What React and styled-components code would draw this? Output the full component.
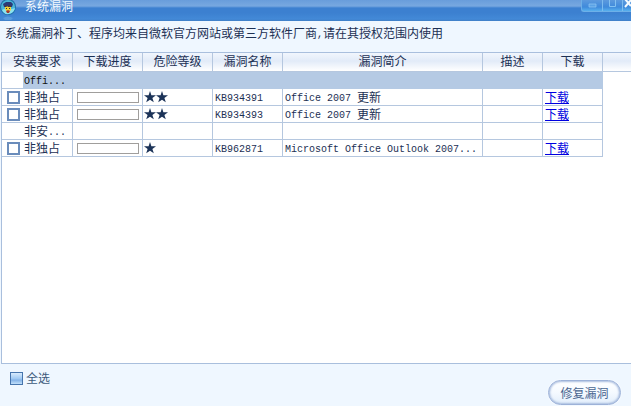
import React, { useState } from 'react'
import styled, { createGlobalStyle } from 'styled-components'


const GlobalStyle = createGlobalStyle`
    * {
        box-sizing: border-box;
    }

    body {
        margin: 0;
        overflow: hidden;
        font-family: "Noto Sans CJK SC", sans-serif;
        font-size: 12px;
        line-height: 16px;
        color: #1c3054;
    }
`

const Container = styled.div`
    display: flex;
    flex-direction: column;
    height: 100vh;
    background-color: #eff7ff;
`

const TitleBar = styled.header`
    display: flex;
    justify-content: space-between;
    align-items: flex-start;
    height: 21px;
    flex-shrink: 0;
    background: linear-gradient(#689ddb 0px, #77a8e0 6px, #3c80d0 8px, #3c80d0 13px, #4389d7 19px, #3f7fc6 21px);
`

const Brand = styled.div`
    display: flex;
    gap: 9px;
    height: 21px;
`

const Title = styled.h1`
    margin: 0;
    font-size: 12px;
    line-height: 12px;
    font-weight: 400;
    color: #f4faff;
`

const WindowButtons = styled.div`
    display: flex;
    height: 12px;
    border: 1px solid #6db0e8;
    border-width: 0 0 1px 1px;
    border-radius: 0 0 0 3px;
    background: linear-gradient(#5d9ade, #3f8adb 7px, #58b0ee);
`

const WindowButton = styled.button`
    display: flex;
    width: ${props => props.$width}px;
    height: 11px;
    padding: 0;
    justify-content: center;
    overflow: hidden;
    border: 0;
    border-left: ${props => props.$first ? '0' : '1px solid #7dbcef'};
    background: none;
`

const Notice = styled.p`
    margin: 0;
    padding: 4px 5px 11px;
`

const Panel = styled.main`
    flex: 1;
    margin-left: 1px;
    border: 1px solid #a9bfdd;
    border-right: 0;
    background-color: #ffffff;
    overflow: hidden;
`

const HeadBand = styled.div`
    min-height: 100%;
    background: linear-gradient(#f1f6fd 0px, #e2ebf8 8px, #ffffff 18px) top / 100% 18px no-repeat,
        linear-gradient(#b5c7df, #b5c7df) 0 18px / 100% 1px no-repeat;
`

const Table = styled.table`
    width: 601px;
    table-layout: fixed;
    border-collapse: separate;
    border-spacing: 0;
`

const Col = styled.col`
    width: ${props => props.$width}px;
`

const HeadCell = styled.th`
    height: 19px;
    padding: 0 0 2px;
    font-weight: 400;
    border-right: 1px solid #b5c7df;
    border-bottom: 1px solid #b5c7df;
`

const Row = styled.tr`
    color: ${props => props.$selected ? '#101010' : 'inherit'};
    background-color: ${props => props.$selected ? '#b5cae4' : '#ffffff'};
`

const Cell = styled.td`
    height: 17px;
    padding: 0 0 0 ${props => props.$inset || 1}px;
    line-height: 16px;
    white-space: nowrap;
    overflow: hidden;
    border-right: 1px solid ${props => props.$selected ? '#b5cae4' : '#b5c7df'};
    border-bottom: 1px solid ${props => props.$selected ? '#b5cae4' : '#b5c7df'};
`

const CheckCell = styled(Cell)`
    padding-left: 5px;
    border-right: 0;
    background-color: #ffffff;
`

const Latin = styled.span`
    font-family: "Liberation Mono", monospace;
    font-size: 10px;
    line-height: 10px;
    vertical-align: 1px;
`

const Checkbox = styled.input.attrs({ type: 'checkbox' })`
    appearance: none;
    display: block;
    width: 13px;
    height: 13px;
    margin: 0;
    border: 2px solid #6a8cbb;
    background-color: #ffffff;

    &:checked {
        background-color: #6a8cbb;
    }
`

const AllCheckbox = styled(Checkbox)`
    border: 1px solid #4675ad;
    background: linear-gradient(#d8ebfd, #9cc7f2 6px, #83b1e6 7px, #c1e0fb);
`

const Progress = styled.progress`
    appearance: none;
    display: block;
    width: 62px;
    height: 11px;
    border: 1px solid #a09e9c;
    background-color: #ffffff;

    &::-webkit-progress-bar {
        background-color: #ffffff;
    }
`

const StarList = styled.div`
    display: flex;
`

const Star = styled.svg`
    display: block;
    width: 12px;
    height: 12px;
`

const Link = styled.a`
    color: #0000e0;
    text-decoration: underline;
`

const Footer = styled.footer`
    display: flex;
    justify-content: space-between;
    align-items: flex-start;
    height: 42px;
    flex-shrink: 0;
    padding: 0 10px;
`

const SelectAll = styled.label`
    display: flex;
    align-items: center;
    gap: 3px;
    padding-top: 6px;
    color: #3c5a7c;
`

const RepairButton = styled.button`
    width: 73px;
    height: 25px;
    margin-top: 16px;
    padding: 0;
    border: 1px solid #9db2d8;
    border-radius: 13px;
    background: linear-gradient(#ffffff, #f4f9ff 12px, #e2eefb);
    box-shadow: inset 0 0 2px 1px #a9bddf, 0 0 2px #ffffff;
    font-family: inherit;
    font-size: 12px;
    line-height: 16px;
    color: #4a6690;
    white-space: nowrap;
`

const headings = ['下载进度', '危险等级', '漏洞名称', '漏洞简介', '描述', '下载']

const groups = [
  {
    name: <Latin>Offi...</Latin>,
    selected: true,
    patches: [
      { id: 'KB934391', level: 2, info: 'Office 2007', suffix: '更新' },
      { id: 'KB934393', level: 2, info: 'Office 2007', suffix: '更新' },
    ],
  },
  {
    name: <>非安<Latin>...</Latin></>,
    patches: [
      { id: 'KB962871', level: 1, info: 'Microsoft Office Outlook 2007...' },
    ],
  },
]

const allIds = groups.flatMap(group => group.patches.map(patch => patch.id))

function Logo() {
  return (
    <svg width="16" height="21" viewBox="0 0 16 21" aria-hidden="true">
        <circle cx="8" cy="7" r="8" fill="#1f6fa8" />
        <circle cx="8" cy="7" r="7" fill="#49b5d8" />
        <path d="M2 10Q4 15 9 14Q14 13 15 8L12 9L4 9Z" fill="#8be1ee" />
        <path d="M3 4L6 2H11L13 4L12 7L4 7Z" fill="#2b3a78" />
        <path d="M5 6H11V10L9 12H7L5 9Z" fill="#f0cf38" />
        <path d="M5 6L6 5L7 7L9 5L11 6V7H5Z" fill="#4a3a3b" />
        <path d="M6 8.5H7M9 8.5H10" stroke="#43302a" />
        <path d="M6 11L8 10L10 11L9 13H7Z" fill="#a13b36" />
        <path d="M3 18Q8 15 13 18L11 20H5Z" fill="#73b4e6" opacity=".45" />
    </svg>
  )
}

function Stars({ count }) {
  return (
    <StarList role="img" aria-label={`${count}`}>
        {Array.from({ length: count }, (_, i) => (
          <Star key={i} viewBox="0 0 12 12">
              <path d="M6 0L7.4 4.2H12L8.4 6.9L9.8 11.3L6 8.7L2.2 11.3L3.6 6.9L0 4.2H4.6Z" fill="#1c3358" />
          </Star>
        ))}
    </StarList>
  )
}

function PatchRow({ patch, checked, onToggle }) {
  return (
    <Row>
        <CheckCell>
            <Checkbox aria-label={patch.id} checked={checked} onChange={onToggle} />
        </CheckCell>
        <Cell>非独占</Cell>
        <Cell $inset={4}><Progress value={0} max={100} aria-label={patch.id} /></Cell>
        <Cell $inset={1}><Stars count={patch.level} /></Cell>
        <Cell $inset={2}><Latin>{patch.id}</Latin></Cell>
        <Cell $inset={2}><Latin>{patch.info} </Latin>{patch.suffix}</Cell>
        <Cell />
        <Cell $inset={2}><Link href="#download">下载</Link></Cell>
    </Row>
  )
}

function App() {
  const [chosen, setChosen] = useState([])

  const toggle = (id) => {
    setChosen(chosen.includes(id) ? chosen.filter(item => item !== id) : [...chosen, id])
  }

  return (
    <Container>
        <GlobalStyle/>

        <TitleBar>
            <Brand>
                <Logo/>
                <Title>系统漏洞</Title>
            </Brand>
            <WindowButtons>
                <WindowButton $first $width={20} aria-label="最小化">
                    <svg width="9" height="11"><path d="M1 4H8V7H1Z" fill="#5ba3e6" stroke="#93c8f3" strokeWidth=".7" /></svg>
                </WindowButton>
                <WindowButton $width={20} aria-label="最大化">
                    <svg width="9" height="11"><path d="M1.5 0V6.5H7.5V0" fill="none" stroke="#83c1f1" /></svg>
                </WindowButton>
                <WindowButton $width={9} aria-label="关闭">
                    <svg width="8" height="11"><path d="M2 -1L8 6M8 0L2 7" fill="none" stroke="#f3faff" strokeWidth="2" /></svg>
                </WindowButton>
            </WindowButtons>
        </TitleBar>

        <Notice>系统漏洞补丁、程序均来自微软官方网站或第三方软件厂商<Latin>,</Latin>请在其授权范围内使用</Notice>

        <Panel>
            <HeadBand>
                <Table>
                    <colgroup>
                        {[21, 50, 70, 70, 70, 200, 60, 60].map((width, i) => <Col key={i} $width={width} />)}
                    </colgroup>
                    <thead>
                        <tr>
                            <HeadCell colSpan={2}>安装要求</HeadCell>
                            {headings.map(heading => <HeadCell key={heading}>{heading}</HeadCell>)}
                        </tr>
                    </thead>
                    {groups.map((group, i) => (
                      <tbody key={i}>
                          <Row $selected={group.selected}>
                              <CheckCell />
                              <Cell $selected={group.selected}>{group.name}</Cell>
                              {headings.map(heading => <Cell key={heading} $selected={group.selected} />)}
                          </Row>
                          {group.patches.map(patch => (
                            <PatchRow
                              key={patch.id}
                              patch={patch}
                              checked={chosen.includes(patch.id)}
                              onToggle={() => toggle(patch.id)}
                            />
                          ))}
                      </tbody>
                    ))}
                </Table>
            </HeadBand>
        </Panel>

        <Footer>
            <SelectAll>
                <AllCheckbox
                  checked={chosen.length === allIds.length}
                  onChange={e => setChosen(e.target.checked ? allIds : [])}
                />
                全选
            </SelectAll>
            <RepairButton type="button">修复漏洞</RepairButton>
        </Footer>
    </Container>
  )
}

export default App
